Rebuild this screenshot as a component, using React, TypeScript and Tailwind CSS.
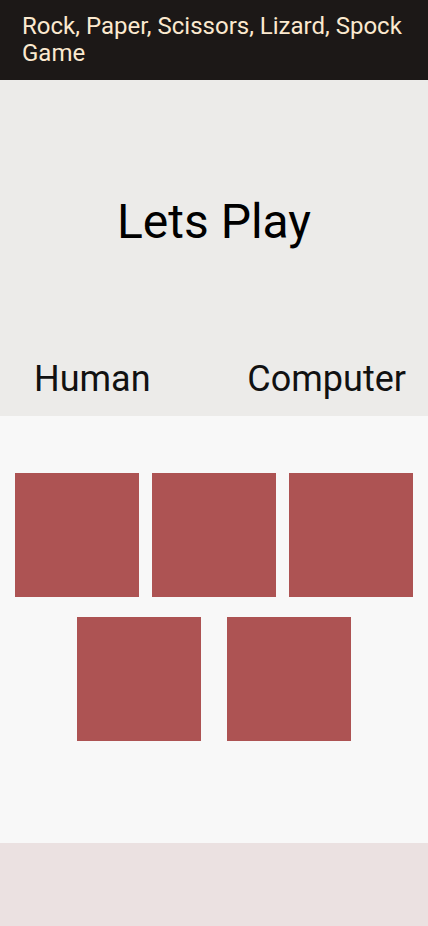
const Tile = () => <div className="h-[124px] w-[124px] bg-[#ad5353]" />;

export default function App() {
  return (
    <div className="flex min-h-[926px] w-full flex-col font-['Roboto',sans-serif]">
      <header className="h-[80px] bg-[#1c1817] px-[22px] pt-[13px] text-[24px] leading-[27px] text-[#fbe9cf]">
        Rock, Paper, Scissors, Lizard, Spock Game
      </header>
      <section className="flex h-[336px] flex-col bg-[#ecebe9] pt-[118px]">
        <div className="text-center text-[48px] leading-[48px] text-black">Lets Play</div>
        <div className="mt-[115px] flex items-center justify-between pl-[34px] pr-[22px] text-[36px] leading-[36px] text-[#111]">
          <span>Human</span>
          <span>Computer</span>
        </div>
      </section>
      <main className="flex h-[427px] flex-col items-center gap-[20px] bg-[#f8f8f8] pt-[57px]">
        <div className="flex gap-[13px]">
          <Tile />
          <Tile />
          <Tile />
        </div>
        <div className="flex gap-[26px]">
          <Tile />
          <Tile />
        </div>
      </main>
      <footer className="flex-1 bg-[#ebe1e1]" />
    </div>
  );
}
